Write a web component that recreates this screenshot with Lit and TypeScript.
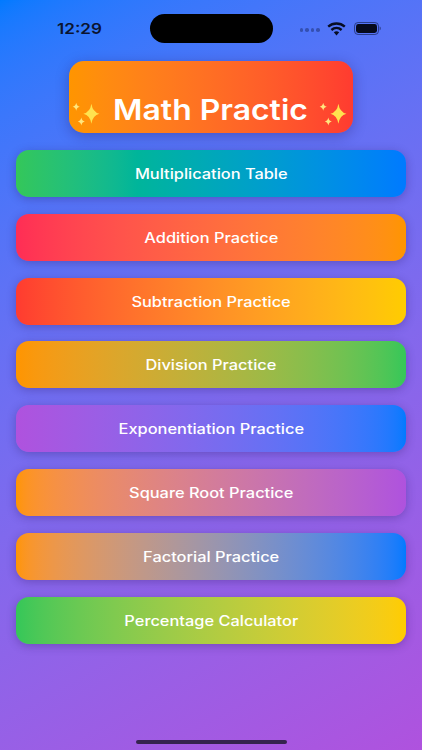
import { LitElement, html, css, svg } from "lit";
import { customElement } from "lit/decorators.js";

const star = (cx: number, cy: number, rx: number, ry: number, fill: string) => {
  const kx = rx * 0.16;
  const ky = ry * 0.16;
  return svg`<path fill=${fill} d="M${cx} ${cy - ry} Q${cx + kx} ${cy - ky} ${cx + rx} ${cy} Q${cx + kx} ${cy + ky} ${cx} ${cy + ry} Q${cx - kx} ${cy + ky} ${cx - rx} ${cy} Q${cx - kx} ${cy - ky} ${cx} ${cy - ry}Z"/>`;
};

const sparkles = svg`<svg class="spark" viewBox="0 0 30 30" aria-hidden="true">
  ${star(19.4, 14.8, 8, 10, "#ffe34f")}
  ${star(4.2, 7.8, 3.6, 4, "#ffe77f")}
  ${star(9.3, 22.5, 3.6, 4, "#ffe77f")}
</svg>`;

const items: [string, string, string][] = [
  ["Multiplication Table", "#34c759", "#007aff"],
  ["Addition Practice", "#ff2d55", "#ff9500"],
  ["Subtraction Practice", "#ff3b30", "#ffcc00"],
  ["Division Practice", "#ff9500", "#34c759"],
  ["Exponentiation Practice", "#af52de", "#007aff"],
  ["Square Root Practice", "#ff9500", "#af52de"],
  ["Factorial Practice", "#ff9500", "#007aff"],
  ["Percentage Calculator", "#34c759", "#ffcc00"],
];

@customElement("app-root")
export class AppRoot extends LitElement {
  static styles = css`
    :host {
      display: flex;
      flex-direction: column;
      width: 422px;
      height: 750px;
      overflow: hidden;
      background: linear-gradient(150.6deg in oklab, #007aff, #af52de);
      font-family: Inter, "Liberation Sans", sans-serif;
    }
    .status {
      height: 37px;
      padding-top: 10px;
      display: grid;
      grid-template-columns: 1fr 123px 1fr;
      align-items: center;
      color: #0b1430;
    }
    .time {
      justify-self: start;
      margin-left: 57px;
      font-size: 15px;
      font-weight: 600;
      line-height: 29px;
      transform: scaleX(1.14);
      transform-origin: left center;
    }
    .island {
      height: 29px;
      border-radius: 15px;
      background: #000;
    }
    .sys {
      justify-self: start;
      margin-left: 27px;
      display: flex;
      align-items: center;
    }
    .dots {
      display: flex;
      gap: 2px;
      margin-right: 7px;
      margin-top: 3px;
    }
    .dots i {
      width: 3.5px;
      height: 3.5px;
      border-radius: 50%;
      background: rgba(20, 35, 90, 0.45);
    }
    .wifi {
      width: 19px;
      height: 14px;
      margin-right: 8px;
      display: block;
    }
    .battery {
      width: 27px;
      height: 13px;
      display: block;
    }
    .title {
      align-self: center;
      box-sizing: border-box;
      width: 284px;
      height: 72px;
      margin-top: 14px;
      padding-bottom: 3px;
      border-radius: 15px;
      background: linear-gradient(to right in oklab, #ff9500, #ff3b30);
      box-shadow: 0 3px 14px rgba(30, 20, 90, 0.32);
      display: flex;
      align-items: flex-end;
      justify-content: space-between;
      color: #fff;
      overflow: hidden;
    }
    .title h1 {
      margin: 0;
      font-size: 28px;
      font-weight: 600;
      line-height: 40px;
      white-space: nowrap;
      transform: scaleX(1.14);
    }
    .spark {
      width: 30px;
      height: 30px;
      flex: none;
      margin-bottom: 1px;
    }
    .spark:first-child {
      margin-left: 3px;
    }
    .spark:last-child {
      margin-right: 4px;
    }
    .list {
      display: flex;
      flex-direction: column;
      gap: 16.8px;
      margin: 17px 16px 0;
    }
    .btn {
      height: 47px;
      border-radius: 13px;
      display: flex;
      align-items: center;
      justify-content: center;
      color: #fff;
      box-shadow: 0 2px 10px rgba(40, 20, 90, 0.3);
    }
    .btn span {
      font-size: 14px;
      font-weight: 500;
      transform: scaleX(1.17);
      white-space: nowrap;
    }
    .home {
      align-self: center;
      width: 151px;
      height: 4px;
      margin-top: auto;
      margin-bottom: 6px;
      border-radius: 2px;
      background: #35234f;
    }
  `;

  render() {
    return html`
      <div class="status">
        <span class="time">12:29</span>
        <div class="island"></div>
        <div class="sys">
          <span class="dots"><i></i><i></i><i></i><i></i></span>
          <svg class="wifi" viewBox="0 0 19 14" aria-hidden="true">
            <path fill="none" stroke="#070d24" stroke-width="2.4" d="M1.2 4.6 C6 .4 13 .4 17.8 4.6"/>
            <path fill="none" stroke="#070d24" stroke-width="2.4" d="M4.4 8 C7.4 5.4 11.6 5.4 14.6 8"/>
            <path fill="#070d24" d="M6.8 10.2 C8.4 8.9 10.6 8.9 12.2 10.2 L9.5 13.4Z"/>
          </svg>
          <svg class="battery" viewBox="0 0 27 13" aria-hidden="true">
            <rect x=".5" y=".5" width="24" height="12" rx="3.6" fill="none" stroke="#1c2b66" stroke-opacity=".75"/>
            <rect x="2" y="2" width="21" height="9" rx="2.4" fill="#060a1c"/>
            <path d="M25.6 4.6 C26.5 5 26.8 5.7 26.8 6.5 C26.8 7.3 26.5 8 25.6 8.4Z" fill="#1c2b66" fill-opacity=".7"/>
          </svg>
        </div>
      </div>
      <div class="title">
        ${sparkles}
        <h1>Math Practic</h1>
        ${sparkles}
      </div>
      <div class="list">
        ${items.map(
          ([label, from, to]) => html`<div
            class="btn"
            style="background:linear-gradient(to right in oklab, ${from}, ${to})"
          >
            <span>${label}</span>
          </div>`
        )}
      </div>
      <div class="home"></div>
    `;
  }
}
